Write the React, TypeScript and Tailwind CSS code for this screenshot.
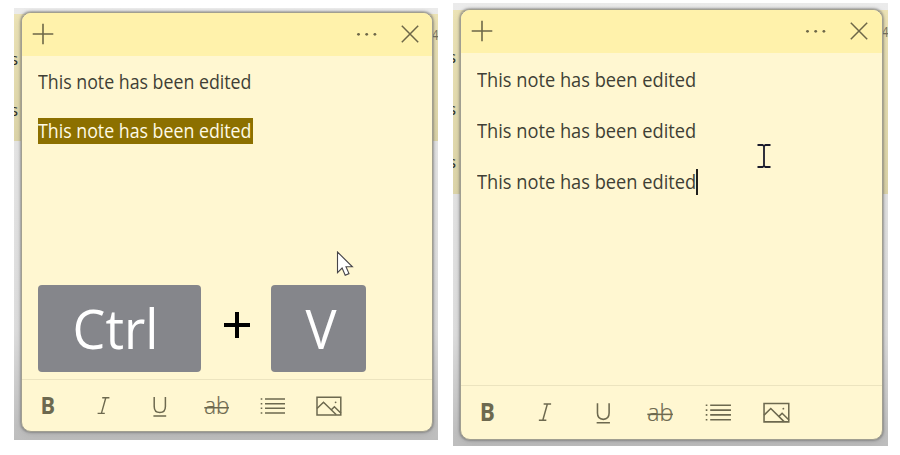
import React from "react";

const LINE = "This note has been edited";

function PlusIcon() {
  return (
    <svg width="22" height="22" viewBox="0 0 22 22" stroke="#6d6748" strokeWidth="1.6">
      <path d="M11 0.7V21.3M0.7 11H21.3" />
    </svg>
  );
}

function MoreIcon() {
  return (
    <svg width="22" height="6" viewBox="0 0 22 6" fill="#6d6748">
      <circle cx="3.5" cy="3.3" r="1.4" />
      <circle cx="11.7" cy="3.3" r="1.4" />
      <circle cx="19.9" cy="3.3" r="1.4" />
    </svg>
  );
}

function CloseIcon() {
  return (
    <svg width="18" height="18" viewBox="0 0 18 18" stroke="#6d6748" strokeWidth="1.5">
      <path d="M0.8 0.8L17.2 17.2M17.2 0.8L0.8 17.2" />
    </svg>
  );
}

function Tools({ className, iconClass }: { className: string; iconClass: string }) {
  const ink = "#6d694f";
  return (
    <div className={`flex items-center ${className}`}>
      <svg className={iconClass} viewBox="0 0 26 26">
        <text x="12.8" y="21" textAnchor="middle" fontSize="23.5" fontWeight="700" fill={ink} textLength="14.6" lengthAdjust="spacingAndGlyphs">B</text>
      </svg>
      <svg className={iconClass} viewBox="0 0 26 26" fill="none" stroke={ink} strokeWidth="1.4">
        <path d="M11.2 4.8H18.4M6.6 20.4H13.8M14.8 4.8L10.4 20.4" />
      </svg>
      <svg className={iconClass} viewBox="0 0 26 26" fill="none" stroke={ink} strokeWidth="1.5">
        <path d="M7.2 4V13.6C7.2 17.5 9.2 19.6 12.8 19.6S18.4 17.5 18.4 13.6V4M6.4 22.9H19.2" />
      </svg>
      <svg className={iconClass} viewBox="0 0 26 26">
        <text x="12.8" y="21.4" textAnchor="middle" fontSize="23.5" fontWeight="300" fill={ink} stroke={ink} strokeWidth="0.2" textLength="25" lengthAdjust="spacingAndGlyphs">ab</text>
        <path d="M0.3 14.8H25" stroke={ink} strokeWidth="1.5" />
      </svg>
      <svg className={iconClass} viewBox="0 0 26 26" fill="none" stroke={ink} strokeWidth="1.6">
        <path d="M5 6H25M5 10.7H25M5 15.3H25M5 20H25" />
        <path d="M0.7 6H2.3M0.7 10.7H2.3M0.7 15.3H2.3M0.7 20H2.3" />
      </svg>
      <svg className={iconClass} viewBox="0 0 26 26" fill="none" stroke={ink} strokeWidth="1.5">
        <path d="M1 4.3H24.8V22H1Z" />
        <path d="M1 15.5L7.5 9.2L20.3 21.8M14.9 17.2L18.4 13.7L25 20.2" />
        <circle cx="19.6" cy="9.3" r="0.9" fill={ink} stroke="none" />
      </svg>
    </div>
  );
}

function NoteHeader({ className }: { className: string }) {
  return (
    <header className={`flex shrink-0 items-center bg-[#fff2ab] pb-[2px] ${className}`}>
      <PlusIcon />
      <span className="ml-auto mr-[24px]">
        <MoreIcon />
      </span>
      <CloseIcon />
    </header>
  );
}

function Key({ label, className }: { label: string; className: string }) {
  return (
    <div className={`flex items-center justify-center rounded-[4px] bg-[#85868b] text-[54px] leading-none text-white ${className}`}>
      <span className="scale-x-[0.965]">{label}</span>
    </div>
  );
}

const NOTE =
  "relative flex flex-col overflow-hidden rounded-[10px] border border-[#a19f91] bg-[#fff7d1] shadow-[0_0_2px_0.5px_rgba(100,100,100,0.5),0_2px_8px_rgba(0,0,0,0.1)]";
const PANEL = "relative shrink-0 overflow-hidden bg-linear-to-b from-[#ebebeb] via-[#dddddd] via-75% to-[#bdbdbd]";
const TEXT = "inline-block origin-left whitespace-nowrap";

export default function App() {
  return (
    <main className="flex h-[455px] w-[900px] items-start gap-[15px] overflow-hidden bg-white pl-[14px] font-['Open_Sans','Noto_Sans',sans-serif] text-[#403f35]">
      <section className={`mt-[8px] h-[432px] w-[424px] pl-[7px] pt-[4px] ${PANEL}`}>
        <div className="absolute inset-x-0 top-[6px] h-[127px] bg-linear-to-b from-[#ece3b6] to-[#ddd5a9] text-[17px] leading-[20px] text-[#33322b]">
          <span className="absolute left-[-4px] top-[35px]">s</span>
          <span className="absolute left-[-4px] top-[86px]">s</span>
          <span className="absolute left-[418px] top-[11px] origin-left scale-x-[0.78] text-[14.5px] text-[#77725c]">4</span>
        </div>
        <article className={`h-[420px] w-[412px] ${NOTE}`}>
          <NoteHeader className="h-[43px] pl-[10px] pr-[13px]" />
          <div className="flex grow flex-col items-start pl-[16px] pt-[13px] text-[19.5px] leading-[26px]">
            <p className="h-[25px]">
              <span className={`scale-x-[0.911] ${TEXT}`}>{LINE}</span>
            </p>
            <p className="mt-[24px] h-[26px] w-[215px] bg-[#8c7000] text-[#fffbe6]">
              <span className={`scale-x-[0.911] ${TEXT}`}>{LINE}</span>
            </p>
            <div className="mt-[141px] flex items-center">
              <Key label="Ctrl" className="h-[87px] w-[163px] pb-[2px] pr-[8px]" />
              <svg className="ml-[23px] mr-[21px] mt-[-7px]" width="26" height="26" viewBox="0 0 26 26" stroke="#000" strokeWidth="4">
                <path d="M13 0V26M0 13H26" />
              </svg>
              <Key label="V" className="h-[87px] w-[95px] pb-[2px] pl-[5px]" />
            </div>
          </div>
          <footer className="flex h-[52px] shrink-0 items-center border-t-[1.5px] border-[#ece4bf] pl-[13px]">
            <Tools className="gap-[30.2px]" iconClass="size-[26px]" />
          </footer>
        </article>
        <svg className="absolute left-[322px] top-[243px]" width="18" height="26" viewBox="0 0 18 26">
          <path d="M1.5 1V21.6L6.1 17L9.2 24.2L13 22.6L10 15.8H16.4Z" fill="#fff" stroke="#47454a" strokeWidth="1.1" />
        </svg>
      </section>

      <section className={`mt-[3px] h-[443px] w-[435px] pl-[7px] pt-[6px] ${PANEL}`}>
        <div className="absolute inset-x-0 top-[7px] h-[184px] bg-linear-to-b from-[#ece3b6] to-[#ddd5a9] text-[17px] leading-[20px] text-[#33322b]">
          <span className="absolute left-[-5px] top-[37px]">s</span>
          <span className="absolute left-[-5px] top-[89px]">s</span>
          <span className="absolute left-[-5px] top-[142px]">s</span>
          <span className="absolute left-[429px] top-[12px] origin-left scale-x-[0.78] text-[14.5px] text-[#77725c]">4</span>
        </div>
        <article className={`h-[431px] w-[423px] ${NOTE}`}>
          <NoteHeader className="h-[43px] pl-[10px] pr-[14px]" />
          <div className="flex grow flex-col items-start gap-[25px] pl-[16px] pt-[14px] text-[20px] leading-[26px]">
            <p className="h-[26px]">
              <span className={`scale-x-[0.912] ${TEXT}`}>{LINE}</span>
            </p>
            <p className="h-[26px]">
              <span className={`scale-x-[0.912] ${TEXT}`}>{LINE}</span>
            </p>
            <p className="h-[26px] w-[221px] border-r-2 border-[#20201e]">
              <span className={`scale-x-[0.912] ${TEXT}`}>{LINE}</span>
            </p>
          </div>
          <footer className="flex h-[54px] shrink-0 items-center border-t-[1.5px] border-[#ece4bf] pl-[13px]">
            <Tools className="gap-[30.8px]" iconClass="size-[27px]" />
          </footer>
        </article>
        <svg className="absolute left-[303px] top-[140px]" width="16" height="26" viewBox="0 0 16 26" fill="none" stroke="#1a1b2c" strokeWidth="1.8">
          <path d="M1.5 2H6.5L8 3L9.5 2H14.5M1.5 24H6.5L8 23L9.5 24H14.5M8 3V23" />
        </svg>
      </section>
    </main>
  );
}
